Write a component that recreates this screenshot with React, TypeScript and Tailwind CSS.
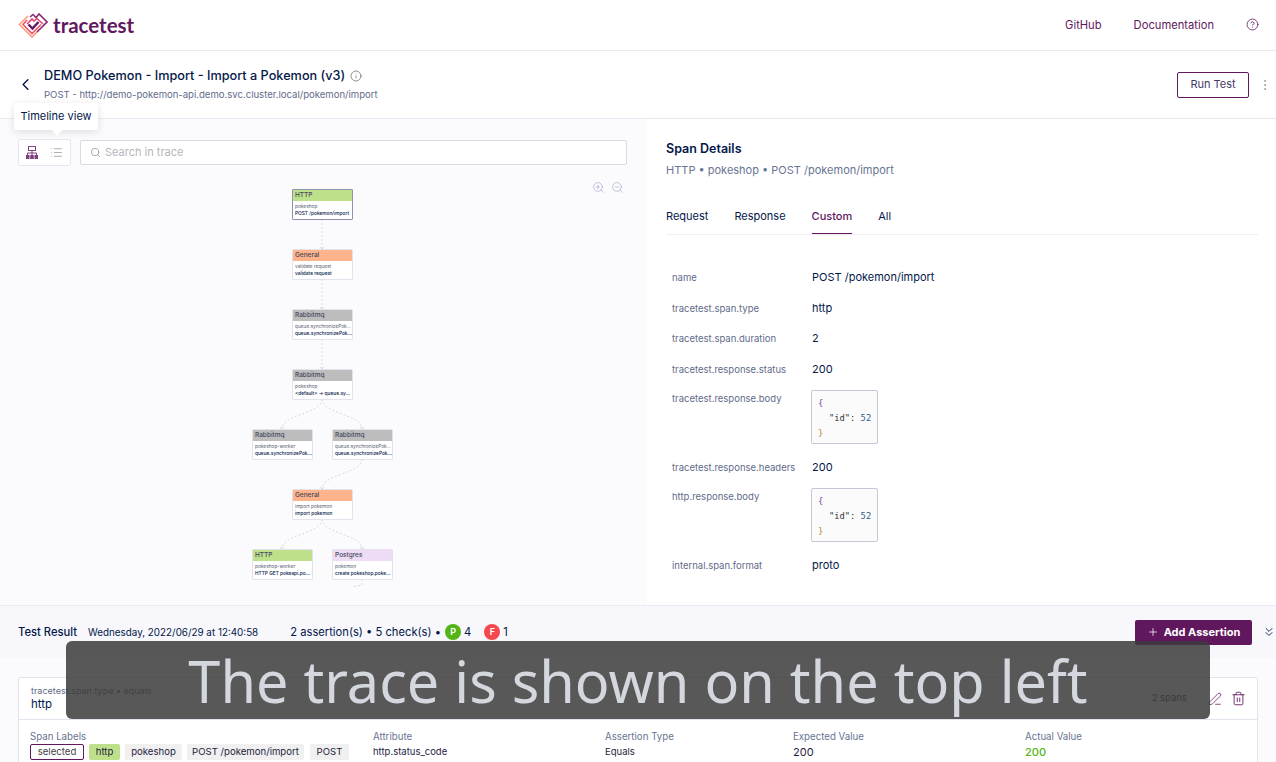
import React from 'react';
import { ChevronLeft, ChevronsDown, CircleHelp, Info, List, MoreVertical, PenLine, Plus, Search, Trash2, ZoomIn, ZoomOut } from 'lucide-react';

const nodes = [
  { x: 292, y: 189, type: 'HTTP', head: 'bg-[#bfe08a]', a: 'pokeshop', b: 'POST /pokemon/import', selected: true },
  { x: 292, y: 249, type: 'General', head: 'bg-[#ffb38a]', a: 'validate request', b: 'validate request' },
  { x: 292, y: 309, type: 'Rabbitmq', head: 'bg-[#bdbdbd]', a: 'queue.synchronizePok...', b: 'queue.synchronizePok...' },
  { x: 292, y: 369, type: 'Rabbitmq', head: 'bg-[#bdbdbd]', a: 'pokeshop', b: '<default> -> queue.sy...' },
  { x: 252, y: 429, type: 'Rabbitmq', head: 'bg-[#bdbdbd]', a: 'pokeshop-worker', b: 'queue.synchronizePok...' },
  { x: 332, y: 429, type: 'Rabbitmq', head: 'bg-[#bdbdbd]', a: 'queue.synchronizePok...', b: 'queue.synchronizePok...' },
  { x: 292, y: 489, type: 'General', head: 'bg-[#ffb38a]', a: 'import pokemon', b: 'import pokemon' },
  { x: 252, y: 549, type: 'HTTP', head: 'bg-[#bfe08a]', a: 'pokeshop-worker', b: 'HTTP GET pokeapi.po...' },
  { x: 332, y: 549, type: 'Postgres', head: 'bg-[#eedcf5]', a: 'pokemon', b: 'create pokeshop.poke...' },
];

const edges = [
  'M322 219 V249',
  'M322 279 V309',
  'M322 339 V369',
  'M322 399 C322 414 282 414 282 429',
  'M322 399 C322 414 362 414 362 429',
  'M362 459 C362 474 322 474 322 489',
  'M322 519 C322 534 282 534 282 549',
  'M322 519 C322 534 362 534 362 549',
  'M362 579 V585 L352 587',
];

const arrowTips = [
  [322, 249],
  [322, 309],
  [322, 369],
  [282, 429],
  [362, 429],
  [322, 489],
  [282, 549],
  [362, 549],
];

const attributes: { name: string; value?: string; json?: boolean }[] = [
  { name: 'name', value: 'POST /pokemon/import' },
  { name: 'tracetest.span.type', value: 'http' },
  { name: 'tracetest.span.duration', value: '2' },
  { name: 'tracetest.response.status', value: '200' },
  { name: 'tracetest.response.body', json: true },
  { name: 'tracetest.response.headers', value: '200' },
  { name: 'http.response.body', json: true },
  { name: 'internal.span.format', value: 'proto' },
];

const Logo = () => (
  <svg width="30" height="28" viewBox="0 0 30 28" fill="none" strokeWidth="1.6" strokeLinejoin="miter">
    <path d="M10 5 L1.5 13.5 L14 26 L20 20" stroke="#f9a07f" />
    <path d="M9 9 L5 13.5 L14 22.5 L23 13.5" stroke="#f0546a" />
    <path d="M12 6 L15 3.5 L18 6.5 L21 3 L29 11 L19 21" stroke="#8a2c72" />
    <path d="M9 13 L14 8 L16 10 L19 7.5 L25 13" stroke="#e0486c" />
    <path d="M10.5 13.5 L14.5 17.5 L20.5 11" stroke="#61175e" strokeWidth="2.4" />
  </svg>
);

const HierarchyIcon = () => (
  <svg width="12" height="13" viewBox="0 0 12 13" fill="none" stroke="#7d3f7b" strokeWidth="1">
    <rect x="2.5" y="0.5" width="7" height="4" />
    <path d="M1.5 9 V7 H10.5 V9 M6 4.5 V9" />
    <rect x="0.5" y="9.5" width="2.5" height="3" fill="#7d3f7b" />
    <rect x="4.75" y="9.5" width="2.5" height="3" fill="#7d3f7b" />
    <rect x="9" y="9.5" width="2.5" height="3" fill="#7d3f7b" />
  </svg>
);

const JsonBox = () => (
  <div className="-ml-px mb-[2px] mt-[1px] h-[54px] w-[67px] rounded-[2px] border border-[#c5c8d8] bg-[#fbfbfb] px-[6px] py-[5px] font-['DejaVu_Sans_Mono',monospace] text-[8.75px] leading-[15px] whitespace-nowrap text-[#333]">
    <div className="text-[#7a4a8a]">{'{'}</div>
    <div className="pl-[11px]">"id": <span className="text-[#2f5f8f]">52</span></div>
    <div className="text-[#b8862c]">{'}'}</div>
  </div>
);

const Tag = ({ children, className = '' }: { children: React.ReactNode; className?: string }) => (
  <span className={`flex h-4 items-center justify-center rounded-[2px] text-[9.6px] text-[#1f2340] ${className}`}>{children}</span>
);

const Field = ({ label, value, className, valueClass = 'text-[9.5px] text-[#1f2340]' }: { label: string; value: string; className: string; valueClass?: string }) => (
  <div className={className}>
    <div className="text-[9.7px] leading-[12px] text-[#687492]">{label}</div>
    <div className={`mt-px leading-[16px] ${valueClass}`}>{value}</div>
  </div>
);

export default function App() {
  return (
    <div className="relative flex h-[762px] w-full flex-col overflow-hidden bg-white font-['Inter',sans-serif] text-[#031849]">
      <header className="flex h-[51px] shrink-0 items-center justify-between border-b border-[#e8e8f0] pl-[18px] pr-[17px]">
        <div className="flex items-center gap-[5px]">
          <Logo />
          <span className="font-['Lato',sans-serif] text-[20.5px] font-bold leading-none text-[#61175e]">tracetest</span>
        </div>
        <div className="flex items-center text-[11.2px] text-[#61175e]">
          <span>GitHub</span>
          <span className="ml-8">Documentation</span>
          <CircleHelp className="ml-8 h-[13px] w-[13px]" strokeWidth={1.5} />
        </div>
      </header>

      <div className="flex h-[68px] shrink-0 items-center justify-between border-b border-[#e8e8f0] pl-[16px] pr-[4px]">
        <div className="flex items-center gap-[9px]">
          <ChevronLeft className="h-[19px] w-[19px]" strokeWidth={1.8} />
          <div className="-mt-[2px]">
            <div className="flex items-center gap-[5px] text-[12.7px] font-medium leading-[18px]">
              DEMO Pokemon - Import - Import a Pokemon (v3)
              <Info className="h-3 w-3 text-[#555]" strokeWidth={1.3} />
            </div>
            <div className="mt-[4px] text-[9.55px] leading-[12px] text-[#5f6b8a]">POST - http://demo-pokemon-api.demo.svc.cluster.local/pokemon/import</div>
          </div>
        </div>
        <div className="flex items-center gap-[9px]">
          <button className="flex h-[26px] w-[72px] items-center justify-center rounded-[2px] border border-[#61175e] text-[11px] text-[#3f3a68]">Run Test</button>
          <MoreVertical className="h-[14px] w-[14px] text-[#9a9a9a]" strokeWidth={1.5} />
        </div>
      </div>

      <main className="flex h-[486px] shrink-0">
        <section className="relative w-[647px] shrink-0 bg-[#fbfbfe]">
          <div className="flex items-center gap-[9px] pl-[18px] pr-[20px] pt-[20px]">
            <div className="flex h-[27px] w-[53px] items-center justify-center gap-[12px] rounded-[2px] border border-[#e6e6ee] bg-white">
              <HierarchyIcon />
              <List className="h-[13px] w-[13px] text-[#8b8b98]" strokeWidth={1.3} />
            </div>
            <div className="flex h-[25px] flex-1 items-center gap-[4px] rounded-[2px] border border-[#d9d9e3] bg-white pl-[9px] text-[11px] text-[#b5b5bd]">
              <Search className="h-[11px] w-[11px] text-[#8b8b98]" strokeWidth={1.6} />
              Search in trace
            </div>
          </div>

          <div className="absolute right-[23px] top-[62px] flex gap-[6px] text-[#aeb2cf]">
            <ZoomIn className="h-[13px] w-[13px]" strokeWidth={1.4} />
            <ZoomOut className="h-[13px] w-[13px]" strokeWidth={1.4} />
          </div>

          {/* trace graph: canvas coordinates are shifted by the 119px the panel starts at */}
          <svg className="absolute left-0 top-[-119px]" width="647" height="605" fill="none" stroke="#d5d7ea" strokeWidth="1">
            {edges.map((d) => (
              <path key={d} d={d} strokeDasharray="2 2" />
            ))}
            {arrowTips.map(([x, y]) => (
              <path key={`${x}-${y}`} d={`M${x - 2} ${y - 2} L${x} ${y} L${x + 2} ${y - 2}`} />
            ))}
          </svg>
          {nodes.map((n, i) => (
            <div
              key={i}
              className={`absolute h-[31px] w-[61px] overflow-hidden rounded-[1px] border bg-white ${n.selected ? 'border-[#8d93ad]' : 'border-[#e3e3ee]'}`}
              style={{ left: n.x, top: n.y - 119 }}
            >
              <div className={`h-[11px] pl-[2px] text-[6.5px] font-medium leading-[10px] text-[#44485c] ${n.head}`}>{n.type}</div>
              <div className="whitespace-nowrap pl-[2px] pt-[2px] text-[4.8px] leading-[7px] text-[#555a70]">{n.a}</div>
              <div className="whitespace-nowrap pl-[2px] text-[4.8px] font-medium leading-[7px] text-[#031849]">{n.b}</div>
            </div>
          ))}
        </section>

        <section className="flex-1 pl-[19px] pr-[18px] pt-[22px]">
          <h2 className="text-[12.5px] font-semibold leading-[16px]">Span Details</h2>
          <p className="mt-[5px] text-[11px] leading-[16px] text-[#687492]">HTTP • pokeshop • POST /pokemon/import</p>
          <div className="mt-[23px] flex h-[34px] gap-[26px] border-b border-[#efeff5] text-[11px]">
            <span className="pt-[7px]">Request</span>
            <span className="pt-[7px]">Response</span>
            <span className="border-b border-[#61175e] pt-[7px] font-medium text-[#61175e]">Custom</span>
            <span className="pt-[7px]">All</span>
          </div>
          <div className="mt-[32px] flex flex-col gap-[10.5px] pl-[6px]">
            {attributes.map((attr) => (
              <div key={attr.name} className="flex">
                <div className={`h-5 w-[140px] shrink-0 text-[9.5px] text-[#5f6b8a] ${attr.json ? 'leading-[20px]' : 'leading-[22px]'}`}>{attr.name}</div>
                {attr.json ? <JsonBox /> : <div className="text-[11px] leading-[20px]">{attr.value}</div>}
              </div>
            ))}
          </div>
        </section>
      </main>

      <footer className="flex-1 border-t border-[#ececf2] bg-[#fbfbfe]">
        <div className="flex h-[52px] items-center bg-[#f7f7fc] pl-[18px]">
          <span className="text-[11.2px] font-medium">Test Result</span>
          <span className="ml-[11px] text-[9.85px]">Wednesday, 2022/06/29 at 12:40:58</span>
          <span className="ml-[32px] text-[11.2px]">2 assertion(s) • 5 check(s) •</span>
          <span className="ml-[4px] flex h-4 w-4 items-center justify-center rounded-full bg-[#52b415] text-[9px] font-semibold text-white">P</span>
          <span className="ml-[3px] text-[11.2px]">4</span>
          <span className="ml-[13px] flex h-4 w-4 items-center justify-center rounded-full bg-[#f5484d] text-[9px] font-semibold text-white">F</span>
          <span className="ml-[3px] text-[11.2px]">1</span>
          <button className="ml-auto flex h-[25px] w-[117px] items-center justify-center gap-[5px] rounded-[2px] bg-[#61175e] text-[11px] font-bold text-white">
            <Plus className="h-[12px] w-[12px]" strokeWidth={1.5} />
            Add Assertion
          </button>
          <ChevronsDown className="ml-[10px] h-[14px] w-[14px]" strokeWidth={1.5} />
        </div>
        <div className="mx-[18px] mt-[19px] h-[120px] rounded-t-[2px] border border-[#e3e3ee] bg-white">
          <div className="flex h-[42px] items-center justify-between border-b border-[#e3e3ee] pl-[12px] pr-[11px]">
            <div className="-mt-[2px]">
              <div className="text-[9px] leading-[11px] text-[#5f6b8a]">tracetest.span.type • equals</div>
              <div className="mt-[1px] text-[11.5px] leading-[14px]">http</div>
            </div>
            <div className="flex items-center text-[#61175e]">
              <span className="text-[9.5px] text-[#333]">2 spans</span>
              <PenLine className="ml-[21px] h-[14px] w-[14px]" strokeWidth={1.3} />
              <Trash2 className="ml-[9px] h-[15px] w-[15px]" strokeWidth={1.4} />
            </div>
          </div>
          <div className="flex pl-[11px] pt-[11px]">
            <div className="w-[343px]">
              <div className="text-[9.7px] leading-[12px] text-[#687492]">Span Labels</div>
              <div className="mt-[1px] flex gap-[5px]">
                <Tag className="w-[54px] border border-[#61175e] bg-white"><span className="text-[#444]">selected</span></Tag>
                <Tag className="w-[31px] bg-[#bfe08a]">http</Tag>
                <Tag className="w-[57px] bg-[#f0f0f0]">pokeshop</Tag>
                <Tag className="w-[117px] bg-[#f0f0f0]">POST /pokemon/import</Tag>
                <Tag className="ml-px w-[39px] bg-[#f0f0f0]">POST</Tag>
              </div>
            </div>
            <Field label="Attribute" value="http.status_code" className="w-[232px]" />
            <Field label="Assertion Type" value="Equals" className="w-[188px]" />
            <Field label="Expected Value" value="200" className="w-[232px]" valueClass="text-[11px] text-[#1f2340]" />
            <Field label="Actual Value" value="200" className="w-[120px]" valueClass="text-[11px] font-medium text-[#52b415]" />
          </div>
        </div>
      </footer>

      {/* tooltip over the view switcher */}
      <div className="absolute left-[14px] top-[103px] flex h-[27px] w-[84px] items-center justify-center rounded-[2px] bg-white text-[11px] text-[#031849] shadow-[0_2px_8px_rgba(0,0,0,0.12)]">
        Timeline view
        <span className="absolute left-[38px] top-[27px] h-0 w-0 border-x-[5px] border-t-[6px] border-x-transparent border-t-white" />
      </div>

      {/* video caption */}
      <div className="absolute left-[66px] top-[641px] flex h-[78px] w-[1144px] items-center justify-center rounded-[6px] bg-[#3b3b3b]/85 pt-[2px] font-['Noto_Sans',sans-serif] text-[57.6px] font-normal leading-none text-[#d4d8de]">
        The trace is shown on the top left
      </div>
    </div>
  );
}
